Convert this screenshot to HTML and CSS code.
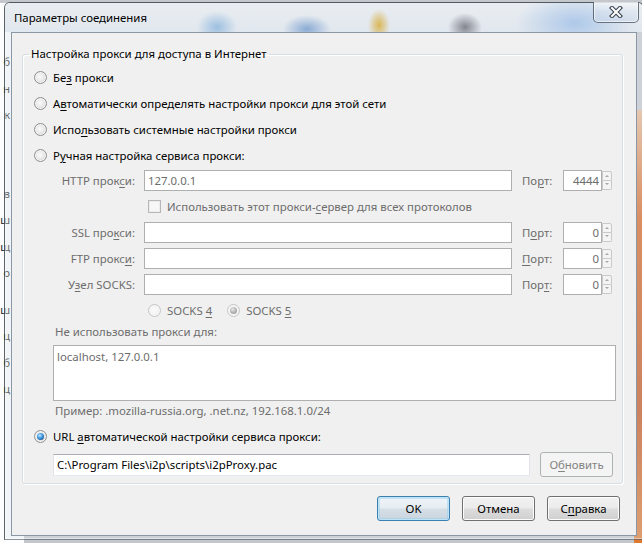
FILE: index.html
```html
<!DOCTYPE html>
<html lang="ru">
<head>
<meta charset="utf-8">
<title>Параметры соединения</title>
<link rel="stylesheet" href="styles.css">
</head>
<body>
<div class="bg-left">
  <div class="frag f1">б</div>
  <div class="frag">н</div>
  <div class="frag">к</div>
  <div class="frag gap">в</div>
  <div class="frag">ш</div>
  <div class="frag">щ</div>
  <div class="frag">о</div>
  <div class="frag gap2">ш</div>
  <div class="frag">ц</div>
  <div class="frag">б</div>
  <div class="frag">ц</div>
</div>
<div class="bg-right"></div>

<div class="dialog">
  <div class="titlebar">
    <span class="title">Параметры соединения</span>
    <div class="close">
      <svg width="14" height="12" viewBox="0 0 14 12">
        <path d="M3 2 L11 10 M11 2 L3 10" stroke="#3b4450" stroke-width="4.2" stroke-linecap="square" fill="none"/>
        <path d="M3 2 L11 10 M11 2 L3 10" stroke="#ffffff" stroke-width="2" stroke-linecap="square" fill="none"/>
      </svg>
    </div>
  </div>

  <div class="client">
    <fieldset class="group">
      <legend>Настройка прокси для доступа в Интернет</legend>

      <div class="opts">
        <div class="radio-row"><span class="radio"></span><span>Бе<u>з</u> прокси</span></div>
        <div class="radio-row"><span class="radio"></span><span>А<u>в</u>томатически определять настройки прокси для этой сети</span></div>
        <div class="radio-row"><span class="radio"></span><span>Испо<u>л</u>ьзовать системные настройки прокси</span></div>
        <div class="radio-row"><span class="radio"></span><span>Р<u>у</u>чная настройка сервиса прокси:</span></div>
      </div>

      <div class="manual">
        <div class="lbl">HTTP прок<u>с</u>и:</div>
        <div class="tb">127.0.0.1</div>
        <div class="plbl">По<u>р</u>т:</div>
        <div class="port"><div class="tb num">4444</div><div class="spin"><div class="up"></div><div class="down"></div></div></div>

        <div class="check-row"><span class="check"></span><span>Использовать этот прокси-<u>с</u>ервер для всех протоколов</span></div>

        <div class="lbl">SSL про<u>к</u>си:</div>
        <div class="tb"></div>
        <div class="plbl">П<u>о</u>рт:</div>
        <div class="port"><div class="tb num">0</div><div class="spin"><div class="up"></div><div class="down"></div></div></div>

        <div class="lbl">FTP прокс<u>и</u>:</div>
        <div class="tb"></div>
        <div class="plbl"><u>П</u>орт:</div>
        <div class="port"><div class="tb num">0</div><div class="spin"><div class="up"></div><div class="down"></div></div></div>

        <div class="lbl">У<u>з</u>ел SOCKS:</div>
        <div class="tb"></div>
        <div class="plbl">Пор<u>т</u>:</div>
        <div class="port"><div class="tb num">0</div><div class="spin"><div class="up"></div><div class="down"></div></div></div>

        <div class="socks-row">
          <span class="radio dis"></span><span class="s4">SOCKS <u>4</u></span>
          <span class="radio dis on"></span><span>SOCKS <u>5</u></span>
        </div>
      </div>

      <div class="exclude">
        <div class="ex-lbl">Не использовать прокси для:</div>
        <div class="area">localhost, 127.0.0.1</div>
        <div class="hint">Пример: .mozilla-russia.org, .net.nz, 192.168.1.0/24</div>
      </div>

      <div class="radio-row url"><span class="radio checked"></span><span>URL <u>а</u>втоматической настройки сервиса прокси:</span></div>

      <div class="url-row">
        <div class="tb url-tb">C:\Program Files\i2p\scripts\i2pProxy.pac</div>
        <div class="btn disabled">О<u>б</u>новить</div>
      </div>
    </fieldset>

    <div class="buttons">
      <div class="btn default">OK</div>
      <div class="btn">Отмена</div>
      <div class="btn">С<u>п</u>равка</div>
    </div>
  </div>
</div>
</body>
</html>
```

FILE: styles.css
```css
* { box-sizing: border-box; }
html, body { margin: 0; padding: 0; }
body {
  width: 642px;
  height: 543px;
  overflow: hidden;
  position: relative;
  background: #c4c8cc;
  font-family: "Noto Sans", "Open Sans", sans-serif;
  font-size: 11.4px;
  color: #000;
}
u { text-decoration-thickness: 1px; text-underline-offset: 2px; }

/* background windows seen through the glass frame */
.bg-left {
  position: absolute;
  left: 0; top: 3px;
  width: 24px; height: 540px;
  background: #fdfdfd;
  display: flex;
  flex-direction: column;
  align-items: flex-end;
  padding-right: 14px;
}
.frag { height: 26.5px; line-height: 26.5px; color: #222; font-size: 11px; }
.frag.f1 { margin-top: 46px; }
.frag.gap { margin-top: 52px; }
.frag.gap2 { margin-top: 10px; }
.bg-right {
  position: absolute;
  right: 0; top: 110px;
  width: 8px; height: 433px;
  background: linear-gradient(#e8b890, #d8601a 25%, #c44e14 70%, #e07a30);
}

/* dialog window */
.dialog {
  position: absolute;
  left: 4px; top: 2px;
  width: 640px; height: 538px;
  border: 1px solid rgba(40, 50, 60, 0.75);
  border-bottom-color: rgba(40, 50, 60, 0.5);
  border-radius: 6px 6px 0 0;
  background: rgba(222, 228, 235, 0.35);
  box-shadow: inset 0 0 0 1px rgba(255,255,255,0.4);
  display: flex;
  flex-direction: column;
  padding: 0 0 3px 0;
}
.titlebar {
  height: 29px;
  flex: none;
  display: flex;
  justify-content: space-between;
  align-items: flex-start;
  padding-left: 8px;
  border-radius: 5px 5px 0 0;
  background:
    radial-gradient(ellipse 20px 16px at 212px 24px, rgba(110,165,215,0.6), rgba(110,165,215,0) 100%),
    radial-gradient(ellipse 24px 14px at 302px 26px, rgba(80,130,195,0.6), rgba(80,130,195,0) 100%),
    radial-gradient(ellipse 11px 16px at 374px 22px, rgba(215,170,50,0.8), rgba(215,170,50,0) 100%),
    radial-gradient(ellipse 17px 14px at 460px 24px, rgba(80,80,90,0.65), rgba(80,80,90,0) 100%),
    radial-gradient(ellipse 60px 30px at 570px 20px, rgba(165,195,232,0.85), rgba(165,195,232,0) 100%),
    linear-gradient(#e9edf1, #e1e7ee);
}
.title {
  line-height: 29px;
  color: #000;
  padding-left: 1px;
}
.close {
  width: 46px;
  height: 21px;
  margin-top: -1px;
  margin-right: 4px;
  border: 1px solid rgba(50, 60, 75, 0.7);
  border-top: none;
  border-radius: 0 0 5px 5px;
  background: linear-gradient(rgba(255,255,255,0.55), rgba(215,225,238,0.5) 50%, rgba(200,214,232,0.55));
  box-shadow: inset 0 0 0 1px rgba(255,255,255,0.55);
  display: flex;
  align-items: center;
  justify-content: center;
}

.client {
  flex: none;
  width: 626px;
  height: 504px;
  margin-left: 6px;
  border: 1px solid #8b97a4;
  background: #f0f0f0;
  display: flex;
  flex-direction: column;
}

/* group box */
.group {
  margin: 13px 0 0 10px;
  width: 601px;
  padding: 0 0 6px 0;
  border: 1px solid #d5dfe5;
  border-radius: 3px;
  box-shadow: inset 1px 1px 0 #fff, 1px 1px 0 #fff;
  min-width: 0;
}
.group legend {
  margin-left: 6px;
  padding: 0 2px;
  line-height: 16px;
}

.opts { padding-top: 2px; }
.radio-row {
  height: 26px;
  display: flex;
  align-items: center;
  padding-left: 11px;
}
.radio-row .radio { margin-right: 6px; }
.radio-row.url { height: 30px; }

.radio {
  flex: none;
  width: 13px; height: 13px;
  border-radius: 50%;
  border: 1px solid #8e8f8f;
  background: radial-gradient(circle at 45% 45%, #fbfbfb 0%, #e9e9e9 45%, #d3d3d3 70%, #eeeeee 100%);
  box-shadow: inset 0 0 0 1px #f6f6f6;
  position: relative;
}
.radio.checked::after,
.radio.on::after {
  content: "";
  position: absolute;
  left: 2px; top: 2px;
  width: 7px; height: 7px;
  border-radius: 50%;
  background: radial-gradient(circle at 40% 35%, #c8ecff 0%, #52a8e6 35%, #1d5fa8 75%, #16407a 100%);
}
.radio.dis {
  border-color: #c5c5c5;
  background: radial-gradient(circle at 45% 45%, #fbfbfb 0%, #f2f2f2 60%, #ececec 100%);
}
.radio.dis.on::after {
  background: radial-gradient(circle at 40% 35%, #e8e8e8 0%, #b5b5b5 50%, #8e8e8e 100%);
}

/* manual proxy grid */
.manual {
  margin: 2px 0 0 29px;
  display: grid;
  grid-template-columns: 92px 368px 51px 49px;
  grid-template-rows: 21px 21px 21px 21px 21px 20px;
  row-gap: 5px;
  color: #6d6d6d;
}
.lbl {
  text-align: right;
  padding-right: 9px;
  line-height: 21px;
  white-space: nowrap;
}
.plbl {
  padding-left: 10px;
  line-height: 21px;
}
.tb {
  height: 21px;
  border: 1px solid #afafaf;
  background: #fff;
  padding: 0 3px;
  display: flex;
  align-items: center;
  color: #6d6d6d;
  white-space: nowrap;
}
.port { display: flex; }
.port .tb.num {
  width: 39px;
  justify-content: flex-end;
  padding-right: 2px;
}
.spin {
  width: 10px;
  display: flex;
  flex-direction: column;
  padding: 1px 0;
}
.spin div {
  flex: 1;
  border: 1px solid #c9c9c9;
  background: #f4f4f4;
  position: relative;
}
.spin .up { border-radius: 0 2px 0 0; }
.spin .down { border-radius: 0 0 2px 0; border-top: none; }
.spin div::after {
  content: "";
  position: absolute;
  left: 2px; top: 3px;
  border-left: 2px solid transparent;
  border-right: 2px solid transparent;
}
.spin .up::after { border-bottom: 2px solid #a8a8a8; }
.spin .down::after { border-top: 2px solid #a8a8a8; top: 2px; }

.check-row {
  grid-column: 2 / 5;
  display: flex;
  align-items: center;
  padding-left: 4px;
}
.check {
  flex: none;
  width: 13px; height: 13px;
  border: 1px solid #b7b7b7;
  background: #f7f7f7;
  box-shadow: inset 0 0 0 1px #ececec;
  margin-right: 6px;
}
.socks-row {
  grid-column: 2 / 5;
  display: flex;
  align-items: center;
  padding-left: 4px;
}
.socks-row .radio { margin-right: 6px; }
.socks-row .s4 { margin-right: 15px; }

/* exclusions */
.exclude {
  margin: 4px 0 0 30px;
  color: #6d6d6d;
}
.ex-lbl { line-height: 16px; padding-left: 2px; }
.area {
  margin-top: 5px;
  width: 563px;
  height: 56px;
  border: 1px solid #afafaf;
  background: #fff;
  padding: 4px 3px;
  line-height: 14px;
}
.hint { height: 20px; line-height: 20px; padding-left: 2px; }

.url-row {
  margin: 1px 0 0 30px;
  display: flex;
  align-items: center;
  gap: 10px;
  height: 25px;
}
.url-tb {
  width: 477px;
  height: 22px;
  color: #000;
  border-color: #e2e3ea;
  border-top-color: #abadb3;
  border-bottom-color: #e3e9ef;
}

/* buttons */
.btn {
  flex: none;
  width: 73px;
  height: 25px;
  border: 1px solid #707070;
  border-radius: 3px;
  background: linear-gradient(#f2f2f2 0%, #ebebeb 48%, #dddddd 52%, #cfcfcf 100%);
  box-shadow: inset 0 0 0 1px #fcfcfc;
  display: flex;
  align-items: center;
  justify-content: center;
  color: #000;
}
.btn.default {
  border-color: #3c7fb1;
  box-shadow: inset 0 0 0 1px #bfe3f6, inset 0 0 0 2px rgba(120,200,240,0.35);
  background: linear-gradient(#eef4f8 0%, #e6edf2 48%, #d6dfe6 52%, #c9d4dd 100%);
}
.btn.disabled {
  border-color: #adb2b5;
  background: #f4f4f4;
  box-shadow: none;
  color: #838383;
}
.buttons {
  margin-top: 12px;
  display: flex;
  justify-content: flex-end;
  gap: 12px;
  padding-right: 16px;
}
```
